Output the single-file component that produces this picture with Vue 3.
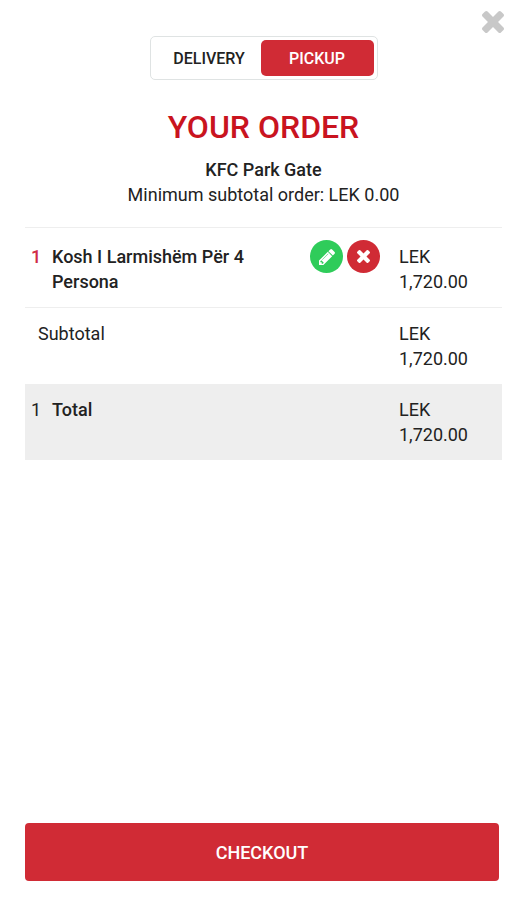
<script setup>
import { ref } from 'vue'

const modes = ['Delivery', 'Pickup']
const mode = ref('Pickup')
const items = [{ qty: 1, name: 'Kosh I Larmishëm Për 4 Persona', price: '1,720.00' }]

const crossPath =
  'M1490 1322q0 40-28 68l-136 136q-28 28-68 28t-68-28l-294-294-294 294q-28 28-68 28t-68-28l-136-136q-28-28-28-68t28-68l294-294-294-294q-28-28-28-68t28-68l136-136q28-28 68-28t68 28l294 294 294-294q28-28 68-28t68 28l136 136q28 28 28 68t-28 68l-294 294 294 294q28 28 28 68z'
const pencilPath =
  'M491 1536l91-91-235-235-91 91v107h128v128h107zm523-928q0-22-22-22-10 0-17 7l-542 542q-7 7-7 17 0 22 22 22 10 0 17-7l542-542q7-7 7-17zm-54-192l416 416-832 832h-416v-416zm683 96q0 53-37 90l-166 166-416-416 166-165q36-38 90-38 53 0 91 38l235 234q37 39 37 91z'
</script>

<template>
  <main class="cart">
    <header class="top">
      <button class="close" type="button" aria-label="Close">
        <svg viewBox="302 366 1188 1188" width="22" height="22" aria-hidden="true">
          <path :d="crossPath" />
        </svg>
      </button>
    </header>

    <div class="modes" role="group" aria-label="Order type">
      <button
        v-for="m in modes"
        :key="m"
        type="button"
        class="mode"
        :class="{ active: m === mode }"
        :aria-pressed="m === mode"
        @click="mode = m"
      >{{ m }}</button>
    </div>

    <h1 class="title">YOUR ORDER</h1>
    <p class="line store">KFC Park Gate</p>
    <p class="line">Minimum subtotal order: LEK 0.00</p>

    <table class="order">
      <colgroup>
        <col class="col-qty" />
        <col />
        <col class="col-actions" />
        <col class="col-price" />
      </colgroup>
      <tbody>
        <tr v-for="item in items" :key="item.name" class="item">
          <td class="qty">{{ item.qty }}</td>
          <td class="name">{{ item.name }}</td>
          <td class="actions">
            <div class="buttons">
              <button class="round edit" type="button" aria-label="Edit item">
                <svg viewBox="128 148 1516 1516" width="16" height="16" aria-hidden="true">
                  <path :d="pencilPath" />
                </svg>
              </button>
              <button class="round remove" type="button" aria-label="Remove item">
                <svg viewBox="302 366 1188 1188" width="13" height="13" aria-hidden="true">
                  <path :d="crossPath" />
                </svg>
              </button>
            </div>
          </td>
          <td class="price">LEK<br />{{ item.price }}</td>
        </tr>
        <tr class="subtotal">
          <td class="label" colspan="3">Subtotal</td>
          <td class="price">LEK<br />1,720.00</td>
        </tr>
        <tr class="total">
          <td class="qty">1</td>
          <td class="name" colspan="2">Total</td>
          <td class="price">LEK<br />1,720.00</td>
        </tr>
      </tbody>
    </table>

    <footer class="bottom">
      <button class="checkout" type="button">CHECKOUT</button>
    </footer>
  </main>
</template>

<style>
body {
  background: #fff;
}
</style>

<style scoped>
.cart {
  box-sizing: border-box;
  min-height: 100vh;
  display: flex;
  flex-direction: column;
  padding: 11px 22px 19px 25px;
  font: 400 18px/25px Roboto, "Noto Sans", sans-serif;
  color: #222;
}
button {
  font: inherit;
  border: 0;
  padding: 0;
  cursor: pointer;
}
svg {
  display: block;
  fill: currentColor;
}
.top {
  display: flex;
  justify-content: flex-end;
  margin-right: -2px;
}
.close {
  background: none;
  color: #c8c8c8;
}
.modes {
  align-self: center;
  display: grid;
  grid-template-columns: 1fr 113px;
  box-sizing: border-box;
  width: 228px;
  margin-top: 3px;
  padding: 3px;
  border: 1px solid #dfe3e3;
  border-radius: 5px;
}
.mode {
  height: 36px;
  border-radius: 5px;
  background: none;
  color: #222;
  font-size: 16px;
  font-weight: 500;
  text-transform: uppercase;
}
.mode:first-child {
  padding-left: 4px;
}
.mode.active {
  background: #d02b35;
  color: #fff;
}
.title {
  margin: 29px 0 12px;
  font-size: 32px;
  line-height: 36px;
  font-weight: 500;
  text-align: center;
  color: #c9141f;
}
.line {
  margin: 0;
  text-align: center;
}
.store,
.name {
  font-weight: 500;
}
.order {
  width: 100%;
  margin-top: 20px;
  border-collapse: separate;
  border-spacing: 0;
  table-layout: fixed;
  border-top: 1px solid #eee;
}
.col-qty {
  width: 27px;
}
.col-actions {
  width: 89px;
}
.col-price {
  width: 103px;
}
td {
  padding: 13px 0;
  vertical-align: top;
  text-align: left;
}
.item td {
  padding: 16px 0 13px;
  border-bottom: 1px solid #eee;
}
.item .actions {
  padding: 12px 0;
}
.item .name {
  padding-right: 12px;
}
td.qty {
  padding-left: 6px;
}
.item .qty {
  padding-left: 6px;
  color: #d02b45;
  font-weight: 500;
}
td.label {
  padding-left: 13px;
}
.total {
  background: #eee;
}
.buttons {
  display: flex;
  gap: 4px;
}
.round {
  width: 33px;
  height: 33px;
  border-radius: 50%;
  display: flex;
  align-items: center;
  justify-content: center;
  color: #fff;
}
.edit {
  background: #2fcc5a;
}
.remove {
  background: #d02b35;
}
.bottom {
  margin-top: auto;
  padding-right: 3px;
}
.checkout {
  width: 100%;
  height: 58px;
  border-radius: 4px;
  background: #d02b35;
  color: #fff;
  font-weight: 500;
}
</style>
